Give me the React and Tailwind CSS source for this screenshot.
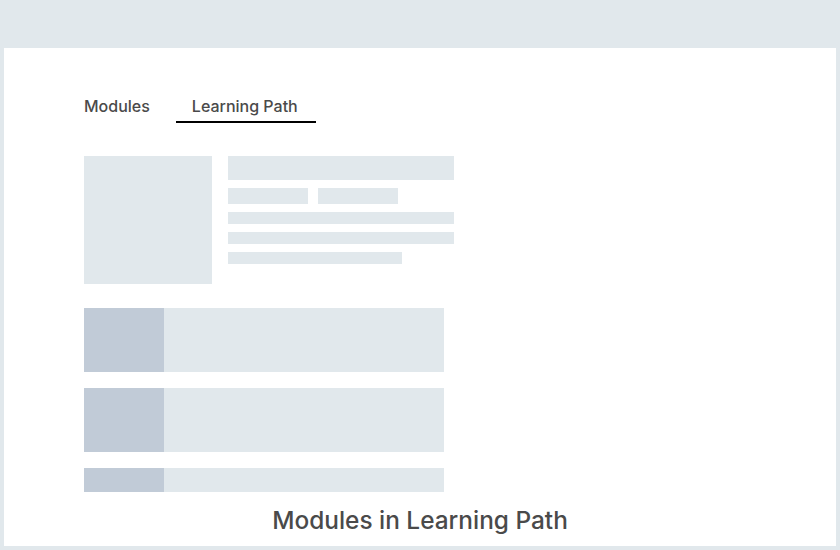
import React from 'react';

const font = { fontFamily: 'Inter, "Noto Sans", sans-serif' };

const Row = ({ height }) => (
  <div className={`flex w-[360px] ${height}`}>
    <div className="w-20 bg-[#c1cbd7]" />
    <div className="flex-1 bg-[#e1e8ec]" />
  </div>
);

const App = () => {
  return (
    <div className="h-[550px] w-[840px] bg-[#e1e8ec] px-1 pb-1 pt-12" style={font}>
      <div className="flex h-full flex-col bg-white pl-20 pt-12">
        <nav className="flex items-end text-[16px] font-medium leading-5 text-[#4a4a4a]">
          <span className="pb-[7px]">Modules</span>
          <span className="ml-[26px] border-b-2 border-black px-[16px] pr-[18px] pb-[5px]">Learning Path</span>
        </nav>

        <section className="mt-[33px] flex gap-4">
          <div className="h-32 w-32 bg-[#e1e8ec]" />
          <div className="flex w-[226px] flex-col gap-2">
            <div className="h-6 bg-[#e1e8ec]" />
            <div className="flex gap-[10px]">
              <div className="h-4 w-20 bg-[#e1e8ec]" />
              <div className="h-4 w-20 bg-[#e1e8ec]" />
            </div>
            <div className="h-3 bg-[#e1e8ec]" />
            <div className="h-3 bg-[#e1e8ec]" />
            <div className="h-3 w-[174px] bg-[#e1e8ec]" />
          </div>
        </section>

        <section className="mt-6 flex flex-col gap-4">
          <Row height="h-16" />
          <Row height="h-16" />
          <Row height="h-6" />
        </section>

        <p className="mt-[14px] -ml-20 text-center text-[24.4px] font-medium leading-7 text-[#4a4a4a]">
          Modules in Learning Path
        </p>
      </div>
    </div>
  );
};

export default App;
